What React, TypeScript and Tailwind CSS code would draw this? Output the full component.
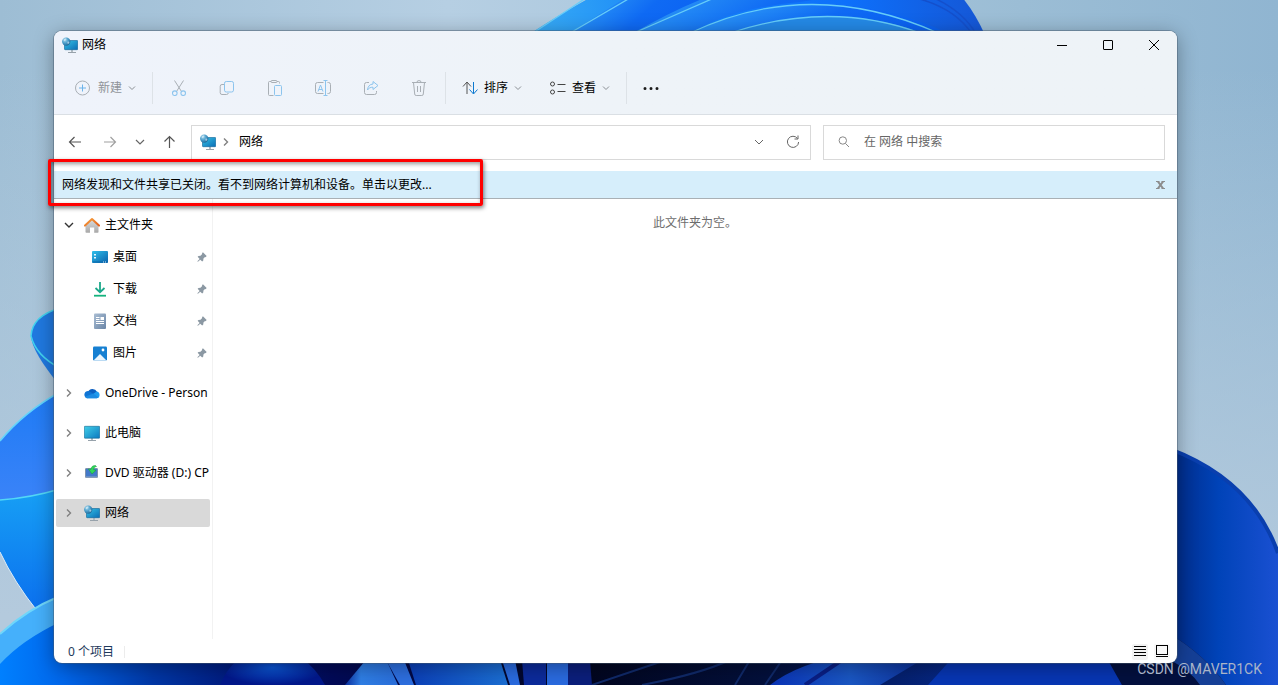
import React, { useState } from 'react';

const quickAccess = [
  { name: '桌面', icon: DesktopIcon },
  { name: '下载', icon: DownloadIcon },
  { name: '文档', icon: DocumentIcon },
  { name: '图片', icon: PictureIcon },
];

const locations = [
  { name: 'OneDrive - Person', icon: CloudIcon },
  { name: '此电脑', icon: PcIcon },
  { name: 'DVD 驱动器 (D:) CP', icon: DvdIcon },
  { name: '网络', icon: NetworkIcon },
];

const fileActions = [
  { label: '剪切', icon: CutIcon },
  { label: '复制', icon: CopyIcon },
  { label: '粘贴', icon: PasteIcon },
  { label: '重命名', icon: RenameIcon },
  { label: '共享', icon: ShareIcon },
  { label: '删除', icon: TrashIcon },
];

function Icon({ children, size = 'w-4 h-4' }: { children: React.ReactNode; size?: string }) {
  return (
    <svg viewBox="0 0 16 16" fill="none" aria-hidden="true" className={`shrink-0 ${size}`}>
      {children}
    </svg>
  );
}

function NetworkIcon() {
  return (
    <Icon>
      <defs>
        <linearGradient id="netScreen" x1="0" y1="0" x2="1" y2="1">
          <stop offset="0" stopColor="#35c3e6" />
          <stop offset="1" stopColor="#0b6db5" />
        </linearGradient>
        <radialGradient id="netGlobe" cx="0.35" cy="0.3" r="0.8">
          <stop offset="0" stopColor="#a5d8ee" />
          <stop offset="0.5" stopColor="#4a9cc9" />
          <stop offset="1" stopColor="#185c8c" />
        </radialGradient>
      </defs>
      <path d="M9 12.500h2V15H9z" fill="#b4bcc2" />
      <path d="M6 15.500h8" stroke="#97a2ab" />
      <rect x="2.500" y="3.500" width="13.200" height="9.200" rx="0.600" fill="url(#netScreen)" stroke="#0f6396" strokeWidth="0.600" />
      <circle cx="4.200" cy="4.600" r="4.200" fill="url(#netGlobe)" />
      <path d="M1.500 3c1-1.500 2.200-1.800 3-1.200.2 1-1 1.200-1.200 2-.6.700-1.400.2-1.800-.8zM5.500 4.800c.8-.6 1.600-.2 1.900.4-.2 1-.8 1.600-1.500 1.900-.5-.8-.7-1.500-.4-2.300z" fill="#e4f4fb" opacity="0.600" />
    </Icon>
  );
}

function HomeIcon() {
  return (
    <Icon>
      <defs>
        <linearGradient id="homeWall" x1="0" y1="0" x2="0" y2="1">
          <stop offset="0" stopColor="#dedede" />
          <stop offset="1" stopColor="#a8a8a8" />
        </linearGradient>
        <linearGradient id="homeRoof" x1="0" y1="0" x2="1" y2="1">
          <stop offset="0" stopColor="#f9a13c" />
          <stop offset="1" stopColor="#e2601c" />
        </linearGradient>
      </defs>
      <path d="M1.500 8 8 2l6.500 6V15a.8.8 0 0 1-.8.8H10.200V10.500H6v5.300H2.300A.8.8 0 0 1 1.500 15z" fill="url(#homeWall)" />
      <path d="M1 8.600 8 2l7 6.600" stroke="url(#homeRoof)" strokeWidth="2" strokeLinecap="round" strokeLinejoin="round" />
    </Icon>
  );
}

function DesktopIcon() {
  return (
    <Icon>
      <defs>
        <linearGradient id="desk" x1="0" y1="0" x2="1" y2="1">
          <stop offset="0" stopColor="#2fc0ea" />
          <stop offset="1" stopColor="#0a62ad" />
        </linearGradient>
      </defs>
      <rect x="0" y="2" width="16" height="12" rx="1" fill="url(#desk)" />
      <path d="M2 5h2v1.500H2zM2 8h2v1.500H2z" fill="#e6f7ff" />
      <path d="M0.500 12.500h15v1h-15z" fill="#0b68ab" />
      <path d="M11 12.500h1v1h-1zM13 12.500h1v1h-1z" fill="#d5ecfa" />
    </Icon>
  );
}

function DownloadIcon() {
  return (
    <Icon>
      <path d="M8 1v10M3.500 7 8 11.200 12.500 7" stroke="#1ba88a" strokeWidth="1.800" />
      <path d="M2 14.700h12" stroke="#14b37d" strokeWidth="1.800" />
    </Icon>
  );
}

function DocumentIcon() {
  return (
    <Icon>
      <defs>
        <linearGradient id="doc" x1="0" y1="0" x2="1" y2="1">
          <stop offset="0" stopColor="#a9bdd3" />
          <stop offset="1" stopColor="#6a85a6" />
        </linearGradient>
      </defs>
      <rect x="2" y="0.500" width="12" height="15.500" rx="1" fill="url(#doc)" />
      <path d="M4 4.500h3.500M4 6.500h3.500M4 8.500h8M4 10.500h8" stroke="#fff" />
      <path d="M8.500 4H12v3H8.500z" fill="#fff" />
    </Icon>
  );
}

function PictureIcon() {
  return (
    <Icon>
      <rect x="1" y="1.500" width="14" height="14" rx="1.200" fill="#1680d2" />
      <path d="M1.500 15.500 8 9l6.500 6.500z" fill="#e9f5fd" />
      <circle cx="11" cy="5" r="1.400" fill="#fff" />
    </Icon>
  );
}

function CloudIcon() {
  return (
    <Icon>
      <path d="M3.800 7.200a5 5 0 0 1 9.200-.4L9 11z" fill="#0c5fc0" />
      <path d="M3.600 13.300A3.600 3.600 0 1 1 5.800 6.600l6 4z" fill="#0f74d4" />
      <path d="M12.500 6.400a3.500 3.500 0 0 1 .3 6.900H3.500z" fill="#1f9bee" />
      <path d="M.9 11.800 9.300 8.400l5.400 4.200c-.6.500-1.300.7-2 .7H3.600c-1 0-2-.6-2.700-1.500z" fill="#1b8ae2" />
    </Icon>
  );
}

function PcIcon() {
  return (
    <Icon>
      <defs>
        <linearGradient id="pc" x1="0" y1="0" x2="1" y2="1">
          <stop offset="0" stopColor="#41cfe8" />
          <stop offset="1" stopColor="#0c79c0" />
        </linearGradient>
      </defs>
      <path d="M7 12h2v3H7z" fill="#b4bcc2" />
      <path d="M4 15.500h8" stroke="#97a2ab" />
      <rect x="0.300" y="1.300" width="15.400" height="11.900" rx="0.600" fill="url(#pc)" stroke="#14648f" strokeWidth="0.600" />
    </Icon>
  );
}

function DvdIcon() {
  return (
    <Icon>
      <rect x="1.500" y="3.500" width="12" height="9" rx="0.500" fill="#4379c9" stroke="#7e93ad" />
      <path d="M2 12h11" stroke="#8ea6c4" />
      <path d="M11.500.5C8.500.5 7 2 7 4.300L4.300 3.900 8 9 12 5.300 9.700 4.800C9.700 3 10.500 1.900 12.500 1.500z" fill="#2fd65a" stroke="#159a3a" strokeWidth="0.500" />
    </Icon>
  );
}

function PinIcon() {
  return (
    <Icon size="w-2.5 h-2.5">
      <path d="M9.500 0.500 15.500 6.500 13.700 8.300l-.9-.3L10.300 10.500l-.3 3.200L8.300 15.300 5.200 12.200 1.500 15.700l-1-1L4.200 11 1 7.700l1.400-1.500 3.200-.3 2.700-2.700L8 2z" fill="#8b98a3" />
    </Icon>
  );
}

function CutIcon() {
  return (
    <Icon>
      <path d="M3.500 0.500 10.500 11.500M12.500 0.500 5.500 11.500" stroke="#a9afb5" />
      <circle cx="3.800" cy="13.200" r="2.300" stroke="#8cc4ee" strokeWidth="1.100" />
      <circle cx="12.200" cy="13.200" r="2.300" stroke="#8cc4ee" strokeWidth="1.100" />
    </Icon>
  );
}

function CopyIcon() {
  return (
    <Icon>
      <path d="M5 4.500H3A1.800 1.800 0 0 0 1.200 6.300v6.400A1.800 1.800 0 0 0 3 14.500h4.500A1.800 1.800 0 0 0 9.300 13" stroke="#a9afb5" />
      <rect x="5.500" y="1.500" width="9" height="10.500" rx="1.800" stroke="#8cc4ee" />
    </Icon>
  );
}

function PasteIcon() {
  return (
    <Icon>
      <path d="M6.500 15.500H2.500a1 1 0 0 1-1-1V2.500a1 1 0 0 1 1-1H4M10 1.500h1.500a1 1 0 0 1 1 1V3.500" stroke="#a9afb5" />
      <rect x="4" y="0.500" width="6" height="2" rx="1" stroke="#a9afb5" />
      <rect x="7.500" y="5.500" width="7" height="10" rx="1" stroke="#8cc4ee" />
    </Icon>
  );
}

function RenameIcon() {
  return (
    <Icon>
      <path d="M8.500 2.500h-6A2 2 0 0 0 .5 4.500v7a2 2 0 0 0 2 2h6M12.500 2.500h1a2 2 0 0 1 2 2v7a2 2 0 0 1-2 2h-1" stroke="#a9afb5" />
      <path d="M3 11.500 5.500 5 8 11.500M3.900 9.500h3.200" stroke="#8cc4ee" />
      <path d="M10.500.5v15M8.500.5h4M8.500 15.500h4" stroke="#8cc4ee" />
    </Icon>
  );
}

function ShareIcon() {
  return (
    <Icon>
      <path d="M6 2.500H3.500a2 2 0 0 0-2 2v8a2 2 0 0 0 2 2h8a2 2 0 0 0 2-2V11" stroke="#a9afb5" />
      <path d="M10 1.500 15 5.500l-5 4V7.200c-2.500 0-4.300.8-5.500 2.800.3-3.500 2.200-5.800 5.500-6z" stroke="#8cc4ee" strokeLinejoin="round" />
    </Icon>
  );
}

function TrashIcon() {
  return (
    <Icon>
      <path d="M1 2.500h14M2.500 2.500 3.700 14a1.500 1.500 0 0 0 1.500 1.500h5.600a1.500 1.500 0 0 0 1.500-1.500l1.200-11.500M6 2.500A1.800 1.800 0 0 1 8 .6a1.800 1.800 0 0 1 2 1.900M6.500 6v6M9.500 6v6" stroke="#a9afb5" />
    </Icon>
  );
}

function ChevronDown() {
  return (
    <svg viewBox="0 0 8 8" fill="none" aria-hidden="true" className="w-2 h-2 shrink-0">
      <path d="M1 2.500 4 5.500 7 2.500" stroke="#8a8f94" />
    </svg>
  );
}

function ChevronRight() {
  return (
    <svg viewBox="0 0 8 8" fill="none" aria-hidden="true" className="w-2 h-2 shrink-0">
      <path d="M2 0.500 5.500 4 2 7.500" stroke="#808080" strokeWidth="1.400" />
    </svg>
  );
}

function Wallpaper() {
  return (
    <svg viewBox="0 0 1278 685" preserveAspectRatio="none" aria-hidden="true" className="absolute inset-0 w-full h-full">
      <defs>
        <linearGradient id="sky" x1="0" y1="0" x2="1" y2="0">
          <stop offset="0" stopColor="#9dbdd4" />
          <stop offset="0.35" stopColor="#b6cfe3" />
          <stop offset="0.8" stopColor="#9bbdd5" />
          <stop offset="1" stopColor="#90b5d1" />
        </linearGradient>
        <linearGradient id="skyLow" x1="0" y1="0" x2="0" y2="1">
          <stop offset="0.1" stopColor="#b7cee0" stopOpacity="0" />
          <stop offset="0.9" stopColor="#b4cadd" />
        </linearGradient>
        <linearGradient id="bloomTop" x1="540" y1="30" x2="980" y2="0" gradientUnits="userSpaceOnUse">
          <stop offset="0" stopColor="#36a9f5" />
          <stop offset="0.3" stopColor="#1684f8" />
          <stop offset="0.7" stopColor="#0d70fb" />
          <stop offset="1" stopColor="#1557d6" />
        </linearGradient>
        <linearGradient id="petal" x1="0" y1="0" x2="1" y2="0.3">
          <stop offset="0" stopColor="#38aaf6" />
          <stop offset="0.6" stopColor="#0f6af4" />
          <stop offset="1" stopColor="#0b62f2" />
        </linearGradient>
        <linearGradient id="leftUpper" x1="0" y1="0" x2="0" y2="1">
          <stop offset="0" stopColor="#1e7bf5" />
          <stop offset="1" stopColor="#3a83f8" />
        </linearGradient>
        <linearGradient id="leftLower" x1="0" y1="0" x2="0" y2="1">
          <stop offset="0" stopColor="#17a0f5" />
          <stop offset="1" stopColor="#0b6fee" />
        </linearGradient>
        <linearGradient id="floor" x1="0" y1="0" x2="1278" y2="0" gradientUnits="userSpaceOnUse">
          <stop offset="0" stopColor="#0080ff" />
          <stop offset="0.05" stopColor="#0066ea" />
          <stop offset="0.12" stopColor="#0037a6" />
          <stop offset="0.18" stopColor="#001c80" />
          <stop offset="0.26" stopColor="#020a58" />
          <stop offset="0.46" stopColor="#020620" />
          <stop offset="0.6" stopColor="#03103c" />
          <stop offset="0.8" stopColor="#0730a0" />
          <stop offset="1" stopColor="#031760" />
        </linearGradient>
        <linearGradient id="rightPetal" x1="1170" y1="0" x2="1278" y2="0" gradientUnits="userSpaceOnUse">
          <stop offset="0" stopColor="#002a86" />
          <stop offset="0.45" stopColor="#0043b8" />
          <stop offset="1" stopColor="#1a50d2" />
        </linearGradient>
        <radialGradient id="ball">
          <stop offset="0" stopColor="#0a56d6" />
          <stop offset="1" stopColor="#02188c" />
        </radialGradient>
        <linearGradient id="blade" x1="0" y1="0" x2="1" y2="0">
          <stop offset="0" stopColor="#0a2fa0" />
          <stop offset="0.3" stopColor="#2f7fe6" />
          <stop offset="1" stopColor="#2a6fdc" />
        </linearGradient>
        <linearGradient id="bladeWide" x1="0" y1="0" x2="1" y2="0">
          <stop offset="0" stopColor="#0b3fb8" />
          <stop offset="1" stopColor="#1b6fd4" />
        </linearGradient>
        <linearGradient id="sweep" x1="0" y1="0" x2="1" y2="0">
          <stop offset="0" stopColor="#0a34b8" />
          <stop offset="0.5" stopColor="#1a57c4" />
          <stop offset="1" stopColor="#0b2c96" />
        </linearGradient>
      </defs>
      <rect width="1278" height="685" fill="url(#sky)" />
      <rect width="1278" height="685" fill="url(#skyLow)" />

      {/* top of the bloom */}
      <path d="M528 35Q600 -12 650 -30H930Q965 -10 985 35z" fill="url(#bloomTop)" />
      <path d="M568 34 635 -8H720L630 34z" fill="url(#petal)" />
      <path d="M632 34Q690 0 740 -14H900L800 2Q730 8 690 34z" fill="url(#petal)" />
      <path d="M688 34Q820 -26 950 34z" fill="url(#petal)" />
      <path d="M728 34Q830 -2 925 34z" fill="#2489e6" />
      <g fill="none" stroke="#66cdf9" strokeWidth="1.300">
        <path d="M533 33 586 -2M570 33 630 -2" />
        <path d="M634 33 714 -2M690 33Q810 -24 938 33M730 33Q830 0 920 33" />
      </g>
      <path d="M916 -2Q955 8 972 34M934 -2Q964 12 976 34" stroke="#1450cc" fill="none" strokeWidth="1.500" />

      {/* left petals */}
      <path d="M60 308Q32 316 31 336Q32 352 60 386z" fill="#2079e0" />
      <path d="M60 308Q32 316 31 336Q36 356 60 368" fill="none" stroke="#42d2ef" strokeWidth="1.500" />
      <path d="M0 441Q24 412 60 392V500H0z" fill="url(#leftUpper)" />
      <path d="M0 441Q24 412 60 392" fill="none" stroke="#62d4fb" strokeWidth="1.500" />
      <path d="M0 500Q30 498 60 489V612H38Q14 582 0 552z" fill="url(#leftLower)" />
      <path d="M0 500Q30 498 60 489" fill="none" stroke="#53d7f6" strokeWidth="1.500" />
      <path d="M0 552Q14 582 38 612" fill="none" stroke="#dcecf8" />

      {/* lower edge */}
      <path d="M0 640Q26 612 60 600H1178V685H0z" fill="url(#floor)" />
      <path d="M0 634Q26 610 60 596V622Q22 640 0 664z" fill="#45b0fb" />
      <path d="M0 634Q26 610 60 596" fill="none" stroke="#6fd6fa" strokeWidth="2" />
      <path d="M220 685Q234 650 270 650T325 685z" fill="url(#ball)" />
      <path d="M345 685 370 655H384L398 685z" fill="url(#blade)" />
      <path d="M386 660 400 685H414L404 660z" fill="#2d6fe0" />
      <path d="M408 660 416 685H508L500 660z" fill="url(#bladeWide)" />
      <path d="M502 660 510 685H520L515 660zM547 660V685H568V660z" fill="#2a6be0" />
      <path d="M522 660 524 685H546V660z" fill="#0c2b9c" />
      <path d="M568 660V685H592L590 660z" fill="#0b1f7c" />
      <path d="M592 685 660 662M642 685Q700 674 730 660M735 685 750 660M765 685 782 660" stroke="#102a6a" strokeWidth="2" fill="none" />
      <path d="M770 685Q800 662 850 655H930L880 685z" fill="url(#sweep)" />
      <path d="M805 685 842 660" stroke="#0a1f86" strokeWidth="4" />
      <path d="M928 685 955 655H1110L1122 685z" fill="#0736b4" />
      <path d="M1105 655 1122 685H1278V600H1170z" fill="#03103f" />

      {/* right petal */}
      <path d="M1170 449Q1252 480 1278 553V685H1226Q1206 656 1170 634z" fill="url(#rightPetal)" />
      <path d="M1170 449Q1252 480 1278 553" fill="none" stroke="#0a3fae" strokeWidth="4" />
      <path d="M1170 634Q1206 656 1226 685H1200Q1190 670 1170 660z" fill="#153f96" />
    </svg>
  );
}

export default function App() {
  const [showNotice, setShowNotice] = useState(true);
  const [selected, setSelected] = useState('网络');
  const [query, setQuery] = useState('');

  return (
    <div className="relative h-screen overflow-hidden pt-[31px] pb-[22px] pl-[54px] pr-[101px] flex flex-col text-xs text-black font-['Noto_Sans','Noto_Sans_CJK_SC',sans-serif]">
      <Wallpaper />

      <main className="relative flex-1 min-h-0 flex flex-col bg-white rounded-lg shadow-[0_0_0_1px_rgba(70,90,110,0.45),0_4px_20px_rgba(0,0,0,0.35)]">
        <header className="shrink-0 rounded-t-lg bg-gradient-to-r from-[#eff3fb] via-[#eef3f8] to-[#eef3f7] border-b border-[#dadfe4]">
          <div className="h-[29px] pb-px flex items-center justify-between">
            <div className="flex items-center gap-1 pl-2">
              <NetworkIcon />
              <h1>网络</h1>
            </div>
            <div className="flex self-stretch">
              <button aria-label="最小化" className="w-[46px] flex items-center justify-center">
                <svg viewBox="0 0 10 10" className="w-2.5 h-2.5"><path d="M0 5.500h10" stroke="#000" /></svg>
              </button>
              <button aria-label="最大化" className="w-[46px] flex items-center justify-center">
                <svg viewBox="0 0 10 10" className="w-2.5 h-2.5"><rect x="0.500" y="0.500" width="9" height="9" rx="0.500" fill="none" stroke="#000" /></svg>
              </button>
              <button aria-label="关闭" className="w-[46px] flex items-center justify-center">
                <svg viewBox="0 0 10 10" className="w-2.5 h-2.5"><path d="M0 0l10 10M10 0 0 10" stroke="#000" /></svg>
              </button>
            </div>
          </div>

          <div className="h-[54px] pt-0.5 pl-5 flex items-center">
            <button disabled className="flex items-center gap-1.5 text-[#8f9499]">
              <Icon>
                <circle cx="8.500" cy="8" r="7" stroke="#a9afb5" />
                <path d="M8.500 4.500v7M5 8h7" stroke="#6cb4ea" />
              </Icon>
              <span className="pl-0.5">新建</span>
              <ChevronDown />
            </button>
            <div className="w-px h-8 ml-4 mr-0.5 bg-[#dde2e7]" />
            {fileActions.map(({ label, icon: ActionIcon }) => (
              <button key={label} disabled aria-label={label} className="w-12 h-8 flex items-center justify-center">
                <ActionIcon />
              </button>
            ))}
            <div className="w-px h-8 ml-0.5 mr-4 bg-[#dde2e7]" />
            <button className="flex items-center gap-1.5">
              <Icon>
                <path d="M5 14V2.500M1 6.500l4-4.500 4 4.500" stroke="#555" />
                <path d="M11.500 2v11.500M7.500 9.500l4 4.500 4-4.500" stroke="#0b78d0" />
              </Icon>
              <span>排序</span>
              <ChevronDown />
            </button>
            <button className="flex items-center gap-1.5 ml-7">
              <Icon>
                <circle cx="2.500" cy="4" r="2" stroke="#444" />
                <circle cx="2.500" cy="12" r="2" stroke="#444" />
                <path d="M7.500 4.500h8M7.500 11.500h8" stroke="#444" />
              </Icon>
              <span>查看</span>
              <ChevronDown />
            </button>
            <div className="w-px h-8 mx-4 bg-[#dde2e7]" />
            <button aria-label="查看更多">
              <Icon>
                <path d="M0.500 8.500a1.500 1.500 0 1 0 3 0 1.500 1.500 0 1 0-3 0zM6.500 8.500a1.500 1.500 0 1 0 3 0 1.500 1.500 0 1 0-3 0zM12.500 8.500a1.500 1.500 0 1 0 3 0 1.500 1.500 0 1 0-3 0z" fill="#1a1a1a" />
              </Icon>
            </button>
          </div>
        </header>

        <div className="h-14 shrink-0 pt-2.5 pl-1 pr-3 flex items-start">
          <nav className="h-[34px] mr-[5px] flex items-stretch">
            <button aria-label="后退" className="w-[34px] flex items-center justify-center">
              <Icon><path d="M14 8H2.500M7.500 3 2.500 8l5 5" stroke="#555" strokeWidth="1.200" /></Icon>
            </button>
            <button aria-label="前进" className="w-9 flex items-center justify-center">
              <Icon><path d="M2 8h11.500M8.500 3l5 5-5 5" stroke="#a0a0a0" strokeWidth="1.200" /></Icon>
            </button>
            <button aria-label="最近浏览的位置" className="w-6 flex items-center justify-center">
              <Icon><path d="M4 6 8 10l4-4" stroke="#666" strokeWidth="1.200" /></Icon>
            </button>
            <button aria-label="向上" className="w-[34px] flex items-center justify-center">
              <Icon><path d="M8.500 14V2.500M3.500 7.500l5-5 5 5" stroke="#555" strokeWidth="1.200" /></Icon>
            </button>
          </nav>
          <div className="flex-1 h-[35px] pb-px pl-2 pr-[9px] flex items-center border border-[#d9d9d9]">
            <NetworkIcon />
            <span className="ml-1.5"><ChevronRight /></span>
            <span className="ml-[9px] flex-1">网络</span>
            <button aria-label="历史记录" className="mr-[18px]">
              <Icon><path d="M4 6 8 10l4-4" stroke="#666" /></Icon>
            </button>
            <button aria-label="刷新">
              <Icon>
                <path d="M12.500 4.500A5.600 5.600 0 1 0 13.600 8M13 1.500v3.500H9.500" stroke="#666" />
              </Icon>
            </button>
          </div>
          <label className="w-[342px] h-[35px] ml-3 pb-px pl-3 flex items-center gap-3 border border-[#d9d9d9]">
            <Icon>
              <circle cx="6.800" cy="6.500" r="3.700" stroke="#888" />
              <path d="M9.500 9.500 13 13" stroke="#888" />
            </Icon>
            <input
              type="text"
              aria-label="搜索"
              value={query}
              onChange={(e) => setQuery(e.target.value)}
              placeholder="在 网络 中搜索"
              className="flex-1 min-w-0 outline-none placeholder:text-[#666]"
            />
          </label>
        </div>

        {showNotice && (
          <div className="relative h-7 shrink-0 pl-2 pr-3 flex items-center justify-between bg-[#d6eefb] border-b border-[#a9b0b5]">
            <button>网络发现和文件共享已关闭。看不到网络计算机和设备。单击以更改...</button>
            <button aria-label="关闭通知" onClick={() => setShowNotice(false)}>
              <svg viewBox="0 0 9 8" className="w-[9px] h-2"><path d="M1.500 0 7.500 8M7.500 0 1.500 8" stroke="#8c8c8c" strokeWidth="2" /><path d="M0 .5h3.500M5.500.5H9M0 7.500h3.500M5.500 7.500H9" stroke="#8c8c8c" /></svg>
            </button>
            <div className="absolute -left-1.5 -top-3 w-[435px] h-[47px] border-[3px] border-[#ff0000] rounded-xs shadow-[1px_2px_4px_rgba(0,0,0,0.5),inset_1px_2px_4px_rgba(0,0,0,0.4)] pointer-events-none" />
          </div>
        )}

        <div className="flex-1 min-h-0 flex">
          <aside className="w-[159px] shrink-0 pt-2.5 px-0.5 border-r border-[#f2f2f2] overflow-hidden">
            <button className="h-8 w-full pl-2 flex items-center">
              <svg viewBox="0 0 10 10" fill="none" className="w-2.5 h-2.5"><path d="M1 3l4 4 4-4" stroke="#333" strokeWidth="1.400" /></svg>
              <span className="ml-2.5 flex items-center gap-[5px]">
                <HomeIcon />
                主文件夹
              </span>
            </button>
            {quickAccess.map(({ name, icon: ItemIcon }) => (
              <button key={name} onClick={() => setSelected(name)} className="h-8 w-full pl-9 pr-[3px] flex items-center gap-[5px]">
                <ItemIcon />
                <span className="flex-1 text-left">{name}</span>
                <PinIcon />
              </button>
            ))}
            <div className="mt-1">
              {locations.map(({ name, icon: ItemIcon }) => (
                <div key={name} className="h-10 flex items-center">
                  <button
                    onClick={() => setSelected(name)}
                    className={`h-7 w-[154px] pl-[9px] flex items-center rounded-xs ${selected === name ? 'bg-[#d9d9d9]' : ''}`}
                  >
                    <ChevronRight />
                    <span className="ml-[11px] flex items-center gap-[5px] whitespace-nowrap">
                      <ItemIcon />
                      {name}
                    </span>
                  </button>
                </div>
              ))}
            </div>
          </aside>
          <section className="flex-1 pt-4 text-center text-[#6d6d6d]">此文件夹为空。</section>
        </div>

        <footer className="h-6 shrink-0 pt-0.5 pl-3.5 pr-[7px] flex items-center">
          <span className="text-[#1e395b]">0 个项目</span>
          <div className="w-px h-3 ml-2.5 bg-[#ececec]" />
          <div className="ml-auto flex items-center gap-1.5">
            <button aria-label="详细信息" className="w-4 h-4 bg-[#f2f2f2] rounded-xs">
              <Icon><path d="M2 2.500h12M2 5.500h12M2 8.500h12M2 11.500h12" stroke="#000" /></Icon>
            </button>
            <button aria-label="大缩略图" className="w-4 h-4 bg-[#f7f7f7] rounded-xs">
              <Icon>
                <rect x="2.500" y="1.500" width="11" height="9" stroke="#000" />
                <path d="M2 12.500h12" stroke="#000" />
              </Icon>
            </button>
          </div>
        </footer>
      </main>

      <p className="absolute right-4 bottom-1.5 text-sm leading-5 font-[Roboto,sans-serif] text-[#a9b4c8]">CSDN @MAVER1CK</p>
    </div>
  );
}
